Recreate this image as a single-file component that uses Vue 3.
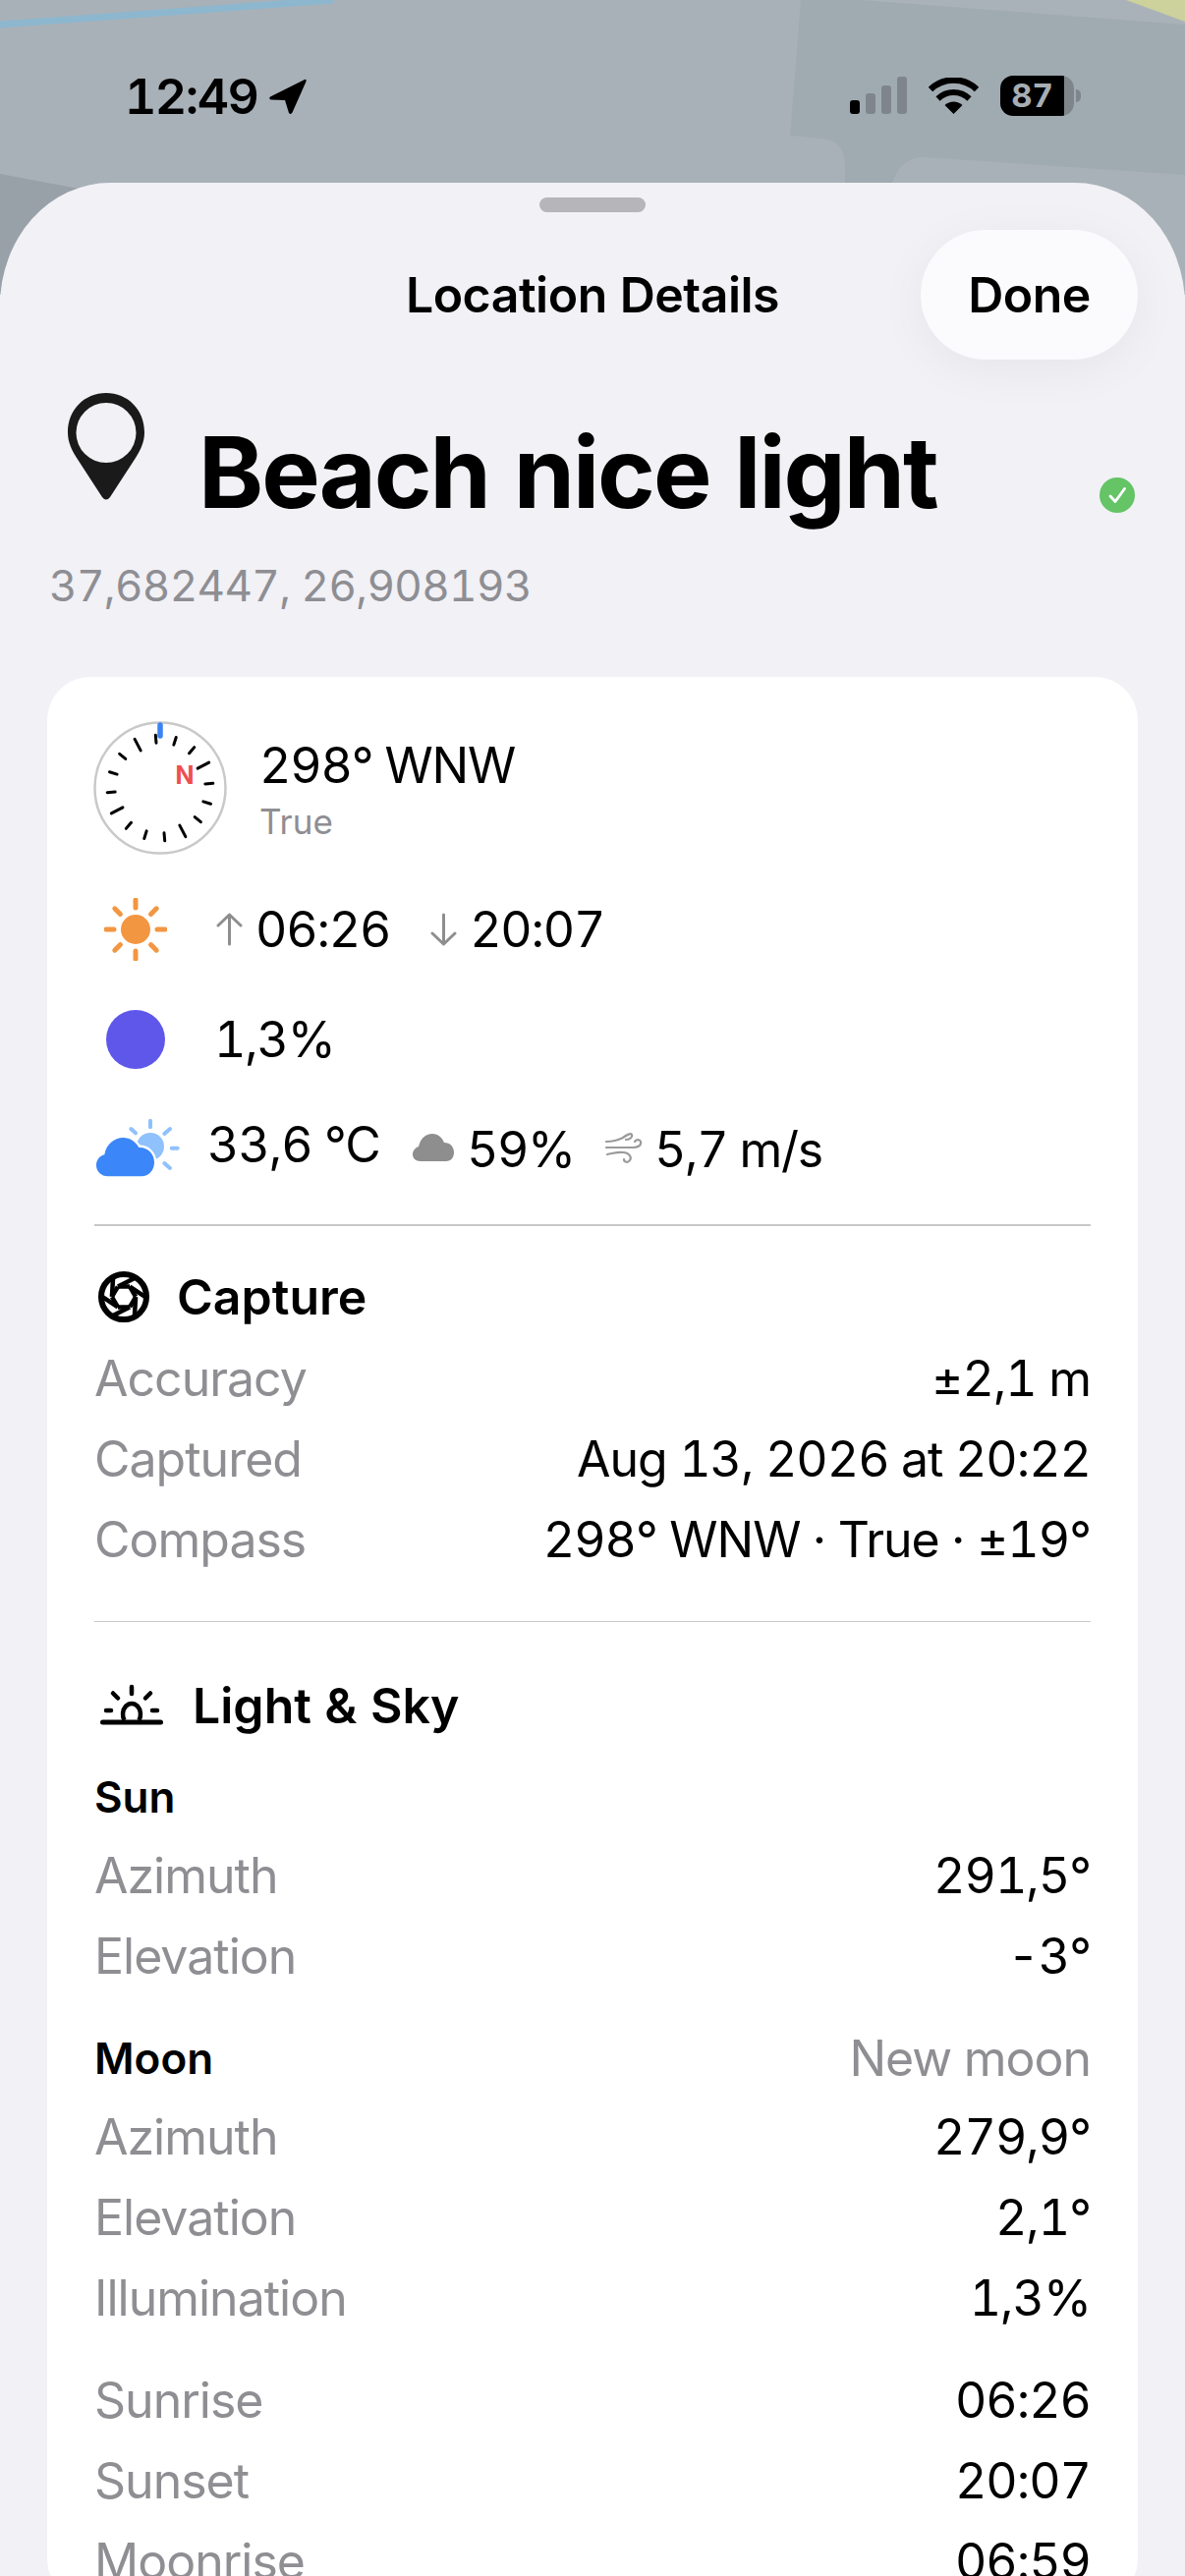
<script setup>
const captureRows = [
  { label: "Accuracy", value: "±2,1 m" },
  { label: "Captured", value: "Aug 13, 2026 at 20:22" },
  { label: "Compass", value: "298° WNW · True · ±19°" },
];
const sunRows = [
  { label: "Azimuth", value: "291,5°" },
  { label: "Elevation", value: "-3°" },
];
const moonRows = [
  { label: "Azimuth", value: "279,9°" },
  { label: "Elevation", value: "2,1°" },
  { label: "Illumination", value: "1,3%" },
];
const timeRows = [
  { label: "Sunrise", value: "06:26" },
  { label: "Sunset", value: "20:07" },
  { label: "Moonrise", value: "06:59" },
];

// 16 ticks, north sits at the heading offset
const ticks = Array.from({ length: 16 }, (_, i) => ({
  angle: 62.5 + i * 22.5,
  major: i % 4 === 0,
}));
const sunRays = [0, 45, 90, 135, 180, 225, 270, 315];
const blades = [0, 60, 120, 180, 240, 300];
</script>

<template>
  <div class="screen">
    <svg class="map" width="1206" height="300" viewBox="0 0 1206 300">
      <rect width="1206" height="300" fill="#a9b1b8" />
      <path d="M0 177 L240 222 V300 H0 Z" fill="#98a1a8" />
      <path d="M815 0 H1206 V300 H860 V170 Q860 142 835 141 L804 138 Z" fill="#a0abb1" />
      <path d="M877 0 L1206 25 V0 Z" fill="#aab2b9" />
      <path d="M1146 0 H1206 V22 Z" fill="#cdd19c" />
      <path d="M907 300 V190 Q915 160 940 160 L1206 178 V300 Z" fill="#a9b1b8" />
      <path d="M0 25 L340 0" stroke="#8db7ce" stroke-width="7" fill="none" />
    </svg>

    <header class="status-bar">
      <div class="status-left">
        <span class="clock">12:49</span>
        <svg width="38" height="38" viewBox="0 0 38 38">
          <path d="M36 2 L1 19.500 Q-1 22 2 22.500 L16 23 L20 36 Q22 38 23.500 35.500 L37.500 4 Q38 1 36 2 Z" fill="#000" />
        </svg>
      </div>
      <div class="status-right">
        <div class="signal">
          <span class="bar bar-on"></span>
          <span class="bar bar-2"></span>
          <span class="bar bar-3"></span>
          <span class="bar bar-4"></span>
        </div>
        <svg width="51" height="37" viewBox="0 0 51 37" fill="none" stroke="#000">
          <path d="M25.500 37 L16.500 28 A13 13 0 0 1 34.500 28 Z" fill="#000" stroke="none" />
          <path d="M9.500 21.500 A23 23 0 0 1 41.500 21.500" stroke-width="6" />
          <path d="M2 12 A34 34 0 0 1 49 12" stroke-width="6.500" />
        </svg>
        <div class="battery">
          <div class="battery-body">
            <span class="battery-fill">87</span>
            <span class="battery-rest"></span>
          </div>
          <span class="battery-tip"></span>
        </div>
      </div>
    </header>

    <main class="sheet">
      <div class="handle"></div>

      <div class="nav">
        <span></span>
        <h2 class="nav-title">Location Details</h2>
        <button class="done-btn">Done</button>
      </div>

      <div class="place-head">
        <svg class="pin" width="78" height="110" viewBox="0 0 78 110">
          <path
            fill-rule="evenodd"
            fill="#1a1a1a"
            d="M39 0 C61 0 78 17 78 40 C78 50 74 58 69 66 L43 106 Q39 111 35 106 L9 66 C4 58 0 50 0 40 C0 17 17 0 39 0 Z M39 10 A30.500 30.500 0 1 0 39 71 A30.500 30.500 0 1 0 39 10 Z"
          />
        </svg>
        <h1 class="place-title">Beach nice light</h1>
        <svg class="sync-ok" width="36" height="36" viewBox="0 0 36 36">
          <circle cx="18" cy="18" r="18" fill="#64c466" />
          <path d="M11 19 L16 24.500 L25.500 11.500" fill="none" stroke="#fff" stroke-width="2.800" stroke-linecap="round" stroke-linejoin="round" />
        </svg>
      </div>
      <p class="coords">37,682447, 26,908193</p>

      <section class="card">
        <div class="heading-row">
          <svg width="136" height="136" viewBox="-68 -68 136 136">
            <circle r="66.500" fill="#fff" stroke="#c9c9c9" stroke-width="2.500" />
            <g v-for="tick in ticks" :key="tick.angle" :transform="`rotate(${tick.angle})`">
              <line
                x1="0"
                :y1="tick.major ? -56 : -54"
                x2="0"
                :y2="tick.major ? -43 : -46"
                stroke="#000"
                stroke-width="3"
                stroke-linecap="round"
              />
            </g>
            <line x1="0" y1="-64" x2="0" y2="-53" stroke="#3b82f6" stroke-width="5.500" stroke-linecap="round" />
            <text class="compass-n" x="25" y="-4" text-anchor="middle">N</text>
          </svg>
          <div class="heading-text">
            <div class="heading-value">298° WNW</div>
            <div class="heading-sub">True</div>
          </div>
        </div>

        <div class="metric-row sun-row">
          <svg class="metric-icon" width="64" height="64" viewBox="-32 -32 64 64">
            <circle r="15" fill="#f39642" />
            <line
              v-for="ray in sunRays"
              :key="ray"
              x1="0"
              y1="-22"
              x2="0"
              y2="-30"
              stroke="#f39642"
              stroke-width="5"
              stroke-linecap="round"
              :transform="`rotate(${ray})`"
            />
          </svg>
          <svg class="arrow first-arrow" width="27" height="34" viewBox="0 0 27 34" fill="none" stroke="#8e8e8e" stroke-width="3" stroke-linecap="round" stroke-linejoin="round">
            <path d="M13.500 32 V2 M2 13 L13.500 2 L25 13" />
          </svg>
          <span class="metric">06:26</span>
          <svg class="arrow" width="27" height="34" viewBox="0 0 27 34" fill="none" stroke="#8e8e8e" stroke-width="3" stroke-linecap="round" stroke-linejoin="round">
            <path d="M13.500 2 V32 M2 21 L13.500 32 L25 21" />
          </svg>
          <span class="metric">20:07</span>
        </div>

        <div class="metric-row moon-row">
          <span class="moon-disc"></span>
          <span class="metric">1,3%</span>
        </div>

        <div class="metric-row weather-row">
          <svg width="85" height="60" viewBox="0 0 255 180">
            <circle cx="165" cy="87" r="42" fill="#8fc1fd" />
            <g stroke="#8fc1fd" stroke-width="12" stroke-linecap="round">
              <line x1="165" y1="8" x2="165" y2="28" />
              <line x1="230" y1="92" x2="248" y2="92" />
              <line x1="208" y1="48" x2="225" y2="33" />
              <line x1="106" y1="33" x2="120" y2="46" />
              <line x1="208" y1="138" x2="225" y2="153" />
            </g>
            <path
              d="M35 178 C15 178 0 163 0 145 C0 128 10 116 25 112 C30 80 55 60 82 60 C103 60 120 72 130 90 C155 88 177 108 177 135 C177 160 160 178 138 178 Z"
              fill="#3b86f8"
              stroke="#fff"
              stroke-width="14"
              paint-order="stroke"
            />
          </svg>
          <span class="metric temp">33,6 °C</span>
          <svg class="cloud-small" width="42" height="28" viewBox="0 0 42 28">
            <path d="M8 28 C3 28 0 25 0 21 C0 17 3 14 6 13 C8 5 13 0 20 0 C26 0 30 4 32 9 C38 9 42 13 42 19 C42 24 39 28 34 28 Z" fill="#8e8e8e" />
          </svg>
          <span class="metric low">59%</span>
          <svg class="wind" width="38" height="34" viewBox="0 0 38 34" fill="none" stroke="#9a9a9a" stroke-width="2.200" stroke-linecap="round">
            <path d="M1 11 C8 11 14 9 18 7 C22 4 26 2 27 4 C28 7 24 9 21 9" />
            <path d="M1 17 H28 C33 17 37 15 36 11 C35 8 31 9 30 11" />
            <path d="M2 24 C8 23 13 21 19 22 C25 23 27 27 25 30 C23 33 19 32 19 29" />
          </svg>
          <span class="metric low">5,7 m/s</span>
        </div>

        <hr class="divider first-divider" />

        <div class="section-head capture-head">
          <svg width="52" height="52" viewBox="-26 -26 52 52" fill="none" stroke="#000">
            <circle r="23" stroke-width="6" />
            <g v-for="blade in blades" :key="blade" :transform="`rotate(${blade})`">
              <line x1="-6" y1="-10.500" x2="13" y2="-20" stroke-width="4.500" />
              <line x1="-6" y1="-10.500" x2="6" y2="-10.500" stroke-width="4.500" />
            </g>
          </svg>
          <h3 class="section-title">Capture</h3>
        </div>
        <div class="rows capture-rows">
          <div v-for="row in captureRows" :key="row.label" class="row">
            <span class="row-label">{{ row.label }}</span>
            <span class="row-value">{{ row.value }}</span>
          </div>
        </div>

        <hr class="divider second-divider" />

        <div class="section-head sky-head">
          <svg width="64" height="44" viewBox="0 0 64 44" fill="none" stroke="#000" stroke-width="4.500" stroke-linecap="round">
            <line x1="2.500" y1="39" x2="61.500" y2="39" stroke-width="5" />
            <path d="M24.500 37 A9 11 0 1 1 39.500 37" stroke-linecap="butt" />
            <line x1="32" y1="3" x2="32" y2="10" />
            <line x1="13" y1="9.500" x2="18" y2="14.500" />
            <line x1="51" y1="9.500" x2="46" y2="14.500" />
            <line x1="6" y1="27" x2="11" y2="27" />
            <line x1="53" y1="27" x2="58" y2="27" />
          </svg>
          <h3 class="section-title">Light &amp; Sky</h3>
        </div>

        <div class="sub-head sun-head">
          <span class="sub-title">Sun</span>
        </div>
        <div class="rows">
          <div v-for="row in sunRows" :key="row.label" class="row">
            <span class="row-label">{{ row.label }}</span>
            <span class="row-value">{{ row.value }}</span>
          </div>
        </div>

        <div class="sub-head moon-head">
          <span class="sub-title">Moon</span>
          <span class="row-label">New moon</span>
        </div>
        <div class="rows">
          <div v-for="row in moonRows" :key="row.label" class="row">
            <span class="row-label">{{ row.label }}</span>
            <span class="row-value">{{ row.value }}</span>
          </div>
        </div>

        <div class="rows time-rows">
          <div v-for="row in timeRows" :key="row.label" class="row">
            <span class="row-label">{{ row.label }}</span>
            <span class="row-value">{{ row.value }}</span>
          </div>
        </div>
      </section>
    </main>
  </div>
</template>

<style>
html,
body {
  margin: 0;
  background: #f1f1f6;
}
</style>

<style scoped>
.screen {
  position: relative;
  width: 1206px;
  height: 2622px;
  overflow: hidden;
  font-family: Inter, "Liberation Sans", sans-serif;
  font-variant-numeric: tabular-nums;
  color: #000;
}

.map {
  position: absolute;
  top: 0;
  left: 0;
}

.status-bar {
  position: relative;
  height: 186px;
  box-sizing: border-box;
  padding: 68px 106px 0 127px;
  display: flex;
  justify-content: space-between;
  align-items: flex-start;
}

.status-left {
  display: flex;
  align-items: center;
  gap: 12px;
  height: 60px;
}

.clock {
  font-size: 50px;
  font-weight: 600;
  line-height: 60px;
  letter-spacing: -1.5px;
}

.status-right {
  display: flex;
  align-items: flex-end;
  gap: 22px;
  height: 48px;
}

.signal {
  display: flex;
  align-items: flex-end;
  gap: 6px;
}

.bar {
  width: 10px;
  border-radius: 3px;
  background: #7e868c;
}

.bar-on {
  height: 14px;
  background: #000;
}

.bar-2 {
  height: 21px;
}

.bar-3 {
  height: 29px;
}

.bar-4 {
  height: 38px;
}

.battery {
  display: flex;
  align-items: center;
  gap: 2px;
  margin-bottom: -2px;
}

.battery-body {
  display: flex;
  width: 75px;
  height: 41px;
  border-radius: 13px;
  overflow: hidden;
}

.battery-fill {
  width: 65px;
  background: #000;
  color: #a6aeb4;
  font-size: 33px;
  font-weight: 700;
  line-height: 41px;
  text-align: center;
}

.battery-rest {
  flex: 1;
  background: #7e868c;
}

.battery-tip {
  width: 5px;
  height: 13px;
  border-radius: 0 6px 6px 0;
  background: #7e868c;
}

.sheet {
  position: relative;
  height: 2436px;
  box-sizing: border-box;
  border-radius: 112px 112px 0 0 / 125px 125px 0 0;
  background: #f1f1f6;
}

.handle {
  width: 108px;
  height: 15px;
  margin: 0 auto;
  position: relative;
  top: 15px;
  border-radius: 8px;
  background: #b5b5ba;
}

.nav {
  display: grid;
  grid-template-columns: 1fr auto 1fr;
  align-items: center;
  margin-top: 33px;
  padding: 0 48px;
}

.nav-title {
  margin: 0;
  font-size: 50px;
  font-weight: 600;
  line-height: 60px;
  letter-spacing: -0.5px;
}

.done-btn {
  justify-self: end;
  width: 221px;
  height: 132px;
  border: 0;
  border-radius: 66px;
  padding: 0;
  background: #fbfbfe;
  box-shadow: 0 10px 50px rgba(0, 0, 0, 0.05);
  font: inherit;
  font-size: 50px;
  font-weight: 600;
  letter-spacing: -0.5px;
  color: #000;
}

.place-head {
  display: flex;
  align-items: flex-start;
  margin-top: 34px;
  padding: 0 51px 0 69px;
}

.pin {
  flex: none;
}

.place-title {
  margin: 23px 0 0 55px;
  font-size: 100px;
  font-weight: 700;
  line-height: 116px;
  letter-spacing: -2px;
  white-space: nowrap;
}

.sync-ok {
  margin: 86px 0 0 auto;
}

.coords {
  margin: 0;
  padding-left: 50px;
  position: relative;
  top: 30px;
  font-size: 44px;
  line-height: 54px;
  letter-spacing: -0.65px;
  color: #8e8e93;
}

.card {
  position: absolute;
  top: 503px;
  left: 48px;
  width: 1110px;
  height: 1960px;
  box-sizing: border-box;
  padding: 46px 48px 0;
  border-radius: 44px;
  background: #fff;
}

.heading-row {
  display: flex;
  align-items: center;
  gap: 33px;
  height: 134px;
  margin-left: -1px;
}

.heading-text {
  padding-top: 10px;
}

.heading-value {
  font-size: 50px;
  line-height: 60px;
  letter-spacing: -1.2px;
}

.heading-sub {
  margin-top: -3px;
  font-size: 35px;
  line-height: 60px;
  color: #8e8e93;
}

.compass-n {
  font-family: Inter, "Liberation Sans", sans-serif;
  font-size: 25px;
  font-weight: 700;
  fill: #ef4f4f;
}

.metric-row {
  display: flex;
  align-items: center;
}

.metric {
  font-size: 50px;
  line-height: 60px;
  letter-spacing: -1.2px;
  white-space: nowrap;
}

.sun-row {
  height: 64px;
  margin-top: 45px;
  padding-left: 10px;
}

.arrow {
  flex: none;
  margin-right: 13px;
}

.first-arrow {
  margin-left: 50px;
}

.sun-row .metric {
  margin-right: 41px;
}

.moon-row {
  height: 60px;
  margin-top: 50px;
  padding-left: 12px;
  gap: 50px;
}

.moon-disc {
  width: 60px;
  height: 60px;
  border-radius: 50%;
  background: #5e57ea;
}

.weather-row {
  height: 60px;
  margin-top: 50px;
  padding-left: 2px;
}

.temp {
  position: relative;
  top: -3px;
  margin-left: 28px;
  letter-spacing: -1px;
}

.low {
  position: relative;
  top: 2px;
  letter-spacing: -1.3px;
}

.cloud-small {
  margin-left: 33px;
  margin-right: 13px;
}

.wind {
  margin-left: 31px;
  margin-right: 12px;
}

.divider {
  margin: 0;
  border: 0;
  height: 1.500px;
  background: #c8c8ca;
}

.first-divider {
  margin-top: 48px;
}

.second-divider {
  margin-top: 42px;
}

.section-head {
  display: flex;
  align-items: center;
  height: 52px;
}

.capture-head {
  margin-top: 46px;
  padding-left: 4px;
  gap: 28px;
}

.sky-head {
  margin-top: 59px;
  padding-left: 6px;
  gap: 30px;
}

.section-title {
  margin: 0;
  font-size: 50px;
  font-weight: 600;
  line-height: 52px;
}

.capture-rows {
  margin-top: 16px;
}

.rows {
  display: flex;
  flex-direction: column;
}

.row {
  display: flex;
  justify-content: space-between;
  align-items: center;
  height: 82px;
  font-size: 50px;
}

.row-label {
  color: #8e8e93;
  font-size: 50px;
  letter-spacing: -1px;
}

.row-value {
  white-space: nowrap;
  letter-spacing: -1px;
}

.sub-head {
  display: flex;
  justify-content: space-between;
  align-items: center;
  height: 60px;
  margin-bottom: 9px;
}

.sun-head {
  margin-top: 37px;
}

.moon-head {
  margin-top: 33px;
}

.sub-title {
  font-size: 44px;
  font-weight: 600;
}

.time-rows {
  margin-top: 22px;
}
</style>
